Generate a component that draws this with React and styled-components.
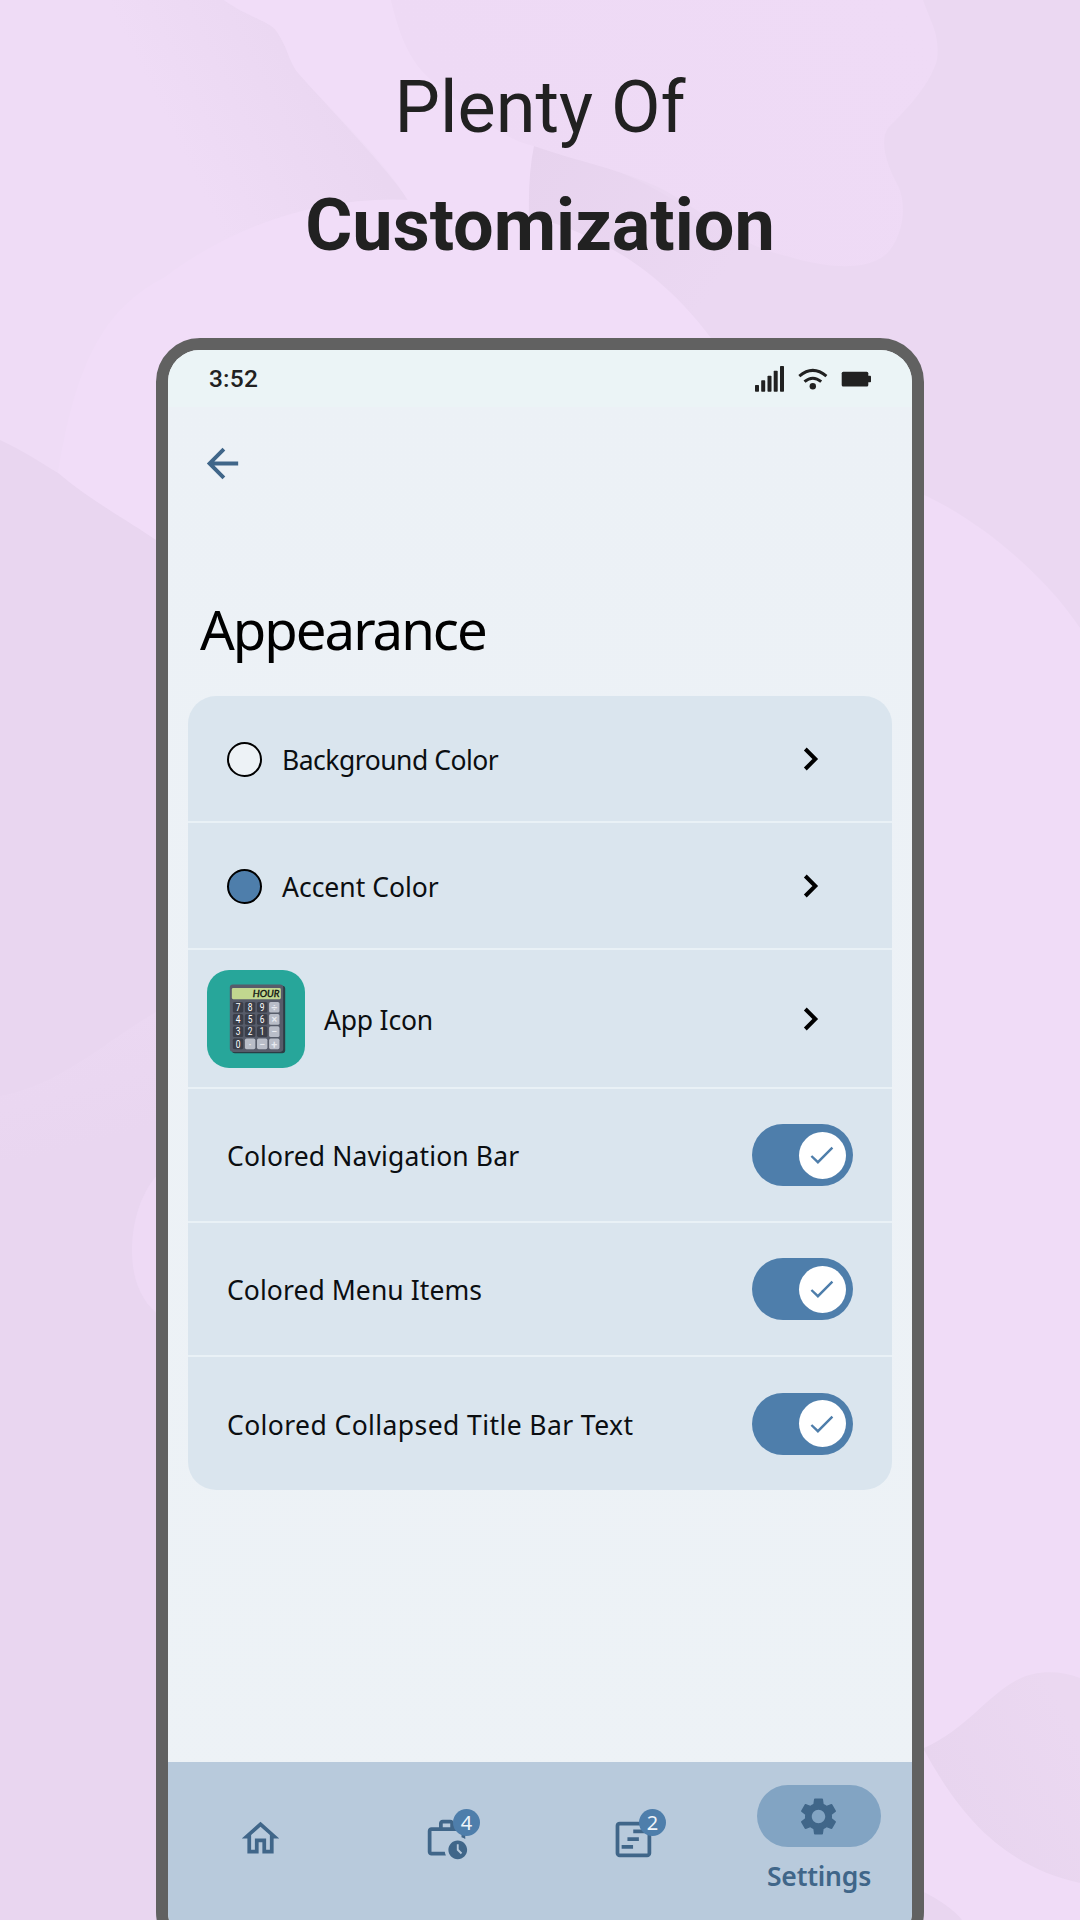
import React from "react";
import styled, { createGlobalStyle } from "styled-components";
import { MdArrowBack, MdOutlineHome, MdOutlineWorkHistory, MdSettings } from "react-icons/md";

const ink = "#406689";
const accent = "#4e7eab";

const GlobalStyle = createGlobalStyle`
  * { box-sizing: border-box; }
  body { margin: 0; background: #ecd9f3; }
`;

const Page = styled.main`
  position: relative;
  width: 1080px;
  height: 1920px;
  overflow: hidden;
  display: flex;
  flex-direction: column;
  align-items: center;
  padding-top: 49px;
  font-family: "Noto Sans", sans-serif;
`;

const Backdrop = styled.svg`
  position: absolute;
  inset: 0;
  width: 1080px;
  height: 1920px;
`;

const Headline = styled.h1`
  position: relative;
  margin: 0;
  height: 289px;
  flex: none;
  font-family: Roboto, sans-serif;
  font-size: 72px;
  line-height: 118px;
  font-weight: 400;
  text-align: center;
  color: #212121;
`;

const HeadlineLine = styled.span`
  display: block;
  font-weight: ${(p) => (p.$strong ? 700 : 400)};
`;

const Phone = styled.section`
  position: relative;
  flex: none;
  width: 768px;
  height: 1618px;
  border: 12px solid #616161;
  border-radius: 44px;
  overflow: hidden;
  display: flex;
  flex-direction: column;
  background: linear-gradient(#ecf1f6, #edf2f6);
`;

const StatusBar = styled.header`
  display: flex;
  justify-content: space-between;
  height: 57px;
  flex: none;
  padding: 0 41px;
  background: #ebf4f6;
  color: #212121;
`;

const Clock = styled.time`
  font: 500 24.5px/57px Roboto, sans-serif;
  letter-spacing: 0.2px;
`;

const StatusIcons = styled.svg`
  width: 118px;
  height: 57px;
  fill: currentColor;
`;

const TopBar = styled.div`
  height: 112px;
  flex: none;
  padding: 0 31px;
  display: flex;
  align-items: center;
  color: ${ink};
`;

const BackButton = styled.button`
  display: flex;
  padding: 0;
  border: 0;
  background: none;
  color: inherit;
`;

const Title = styled.h2`
  margin: 72px 0 0;
  padding-left: 32px;
  height: 105px;
  flex: none;
  font-size: 54.5px;
  line-height: 76px;
  font-weight: 400;
  letter-spacing: -2px;
  color: #000;
`;

const Card = styled.ul`
  list-style: none;
  margin: 0 20px;
  padding: 0;
  height: 794px;
  flex: none;
  border-radius: 28px;
  overflow: hidden;
  background: #dae5ee;
`;

const Row = styled.li`
  display: flex;
  align-items: center;
  height: ${(p) => p.$height}px;
  padding: 0 39px 0 ${(p) => p.$inset}px;
  & + & { border-top: 2px solid #e9f1f6; }
`;

const Label = styled.span`
  flex: 1;
  position: relative;
  top: 1px;
  font-size: 26.5px;
  line-height: 36px;
  letter-spacing: ${(p) => p.$spacing}px;
  white-space: nowrap;
  color: #0b0e11;
`;

const Swatch = styled.span`
  width: 35px;
  height: 35px;
  margin: 1px 20px 0 0;
  border: 2px solid #000;
  border-radius: 50%;
  background: ${(p) => p.$color};
`;

const AppTile = styled.svg`
  width: 98px;
  height: 98px;
  margin-right: 19px;
`;

const Chevron = styled.svg`
  width: 16px;
  height: 24px;
  margin-right: 34px;
  fill: none;
  stroke: #000;
  stroke-width: 4;
`;

const Track = styled.span`
  width: 101px;
  height: 62px;
  padding-right: 7.5px;
  border-radius: 31px;
  background: ${accent};
  display: flex;
  align-items: center;
  justify-content: flex-end;
`;

const Knob = styled.span`
  width: 47px;
  height: 47px;
  border-radius: 50%;
  background: #fff;
  display: flex;
  align-items: center;
  justify-content: center;
`;

const Nav = styled.nav`
  display: flex;
  height: 182px;
  margin-top: auto;
  flex: none;
  padding-bottom: 24px;
  background: #b8cadc;
  color: ${ink};
`;

const NavItem = styled.a`
  width: 186px;
  display: flex;
  flex-direction: column;
  align-items: center;
  justify-content: ${(p) => (p.$active ? "flex-start" : "center")};
  padding-top: ${(p) => (p.$active ? 23 : 0)}px;
  padding-right: ${(p) => (p.$active ? 0 : 2)}px;
  padding-bottom: ${(p) => (p.$active ? 0 : 6)}px;
`;

const NavIcon = styled.span`
  position: relative;
  display: flex;
`;

const Pill = styled.span`
  width: 124px;
  height: 62px;
  padding-right: 1px;
  border-radius: 31px;
  background: #82a4c3;
  display: flex;
  align-items: center;
  justify-content: center;
`;

const Badge = styled.span`
  position: absolute;
  left: 29.5px;
  top: -6.5px;
  width: 27px;
  height: 27px;
  border-radius: 50%;
  background: ${accent};
  color: #eef4fa;
  font-size: 20px;
  line-height: 27px;
  text-align: center;
`;

const NavLabel = styled.span`
  margin-top: 11px;
  font-size: 26.5px;
  line-height: 36px;
  font-weight: 600;
  letter-spacing: -0.2px;
`;

function Waves() {
  return (
    <Backdrop viewBox="0 0 1080 1920" aria-hidden="true">
      <defs>
        <linearGradient id="fold" x1="200" y1="190" x2="352" y2="115" gradientUnits="userSpaceOnUse">
          <stop offset="0" stopColor="#ead7f1" stopOpacity="0" />
          <stop offset="1" stopColor="#ead7f1" />
        </linearGradient>
        <linearGradient id="sheet" x1="560" y1="250" x2="900" y2="0" gradientUnits="userSpaceOnUse">
          <stop offset="0" stopColor="#eedaf5" />
          <stop offset="1" stopColor="#efdbf6" />
        </linearGradient>
        <linearGradient id="wedge" x1="530" y1="150" x2="720" y2="280" gradientUnits="userSpaceOnUse">
          <stop offset="0" stopColor="#e7d3ee" />
          <stop offset="1" stopColor="#ebd8f2" />
        </linearGradient>
        <linearGradient id="band" x1="40" y1="1040" x2="70" y2="1150" gradientUnits="userSpaceOnUse">
          <stop offset="0" stopColor="#ebd8f2" />
          <stop offset="1" stopColor="#ebd8f2" stopOpacity="0" />
        </linearGradient>
        <linearGradient id="leaf" x1="930" y1="1770" x2="1060" y2="1700" gradientUnits="userSpaceOnUse">
          <stop offset="0" stopColor="#e8d5ef" />
          <stop offset="1" stopColor="#ebd8f1" />
        </linearGradient>
      </defs>
      <rect width="1080" height="1920" fill="#ebd8f2" />
      <path d="M0 0H560V600H0Z" fill="#efdcf6" />
      <path d="M100 0H224C250 18 262 18 275 29C290 50 288 62 300 75C340 120 380 160 410 202L200 300L100 200Z" fill="url(#fold)" />
      <path d="M224 0H391C405 60 425 75 441 88C480 120 510 140 534 146L529 215L410 204C385 160 340 120 300 75C288 62 290 50 275 29C262 18 250 18 224 0Z" fill="#f1ddf8" />
      <path d="M534 146C600 160 660 185 700 220L800 260L760 400H560L529 215Q528 175 534 146Z" fill="url(#wedge)" />
      <path d="M391 0C402 48 416 70 441 88C480 118 505 140 534 146C572 160 625 170 664 190C710 215 735 245 790 257C820 266 870 275 890 250C905 230 907 200 896 182C885 160 880 140 888 128C906 110 930 85 937 60C940 35 932 25 923 0Z" fill="url(#sheet)" />
      <path d="M58 473C75 370 100 310 165 277C240 220 330 195 413 200C580 205 660 270 711 338V560H156Z" fill="#f1ddf8" />
      <path d="M0 440C22 450 45 465 58 473C90 500 130 522 156 540V1920H0Z" fill="#e9d6f0" />
      <path d="M0 1096C60 1085 100 1045 156 1012V1160H0Z" fill="url(#band)" />
      <path d="M160 1172C142 1190 132 1220 132 1250C132 1285 145 1305 160 1316Z" fill="#eedaf5" />
      <path d="M920 493C980 520 1045 575 1080 628V1920H920Z" fill="#f0dcf7" />
      <path d="M924 1748C965 1730 988 1695 1017 1680C1035 1670 1060 1670 1080 1678V1883C1000 1865 958 1812 924 1750Z" fill="url(#leaf)" />
      <path d="M920 1890Q950 1905 962 1920H920Z" fill="#e9d6f0" />
    </Backdrop>
  );
}

function Status() {
  return (
    <StatusIcons viewBox="753 350 118 57">
      <rect x="755" y="385" width="4" height="6.7" rx=".7" />
      <rect x="761.2" y="380.2" width="4" height="11.5" rx=".7" />
      <rect x="767.5" y="375.7" width="4" height="16" rx=".7" />
      <rect x="773.7" y="370.8" width="4" height="20.9" rx=".7" />
      <rect x="780" y="366" width="4" height="25.7" rx=".7" />
      <g fill="none" stroke="currentColor" strokeWidth="3">
        <path d="M799.3 376.1Q812.8 364.6 826.4 376.1" />
        <path d="M804.5 381.6Q812.8 374.8 821.2 381.6" />
      </g>
      <circle cx="812.8" cy="386.2" r="3.2" />
      <rect x="841.7" y="371.7" width="26.6" height="14.7" rx="1.5" />
      <rect x="867" y="375.7" width="4" height="6.5" rx=".8" />
    </StatusIcons>
  );
}

const keys = [
  ["7", "8", "9", "÷"],
  ["4", "5", "6", "×"],
  ["3", "2", "1", "−"],
  ["0", "·", "−", "+"],
];

function CalculatorTile() {
  return (
    <AppTile viewBox="0 0 292 292">
      <rect width="292" height="292" rx="66" fill="#27a69a" />
      <rect x="74" y="47" width="159" height="201" rx="9" fill="#2b3d45" />
      <rect x="68" y="43" width="159" height="201" rx="9" fill="#575c6a" />
      <rect x="74" y="54" width="146" height="33" rx="4" fill="#c1d78f" />
      <text x="216" y="80" textAnchor="end" fontFamily="Lato, sans-serif" fontSize="27" fontWeight="400" fontStyle="italic" textLength="80" lengthAdjust="spacingAndGlyphs" fill="#101510" stroke="#101510" strokeWidth="1">HOUR</text>
      {keys.map((line, r) =>
        line.map((key, c) => {
          const light = c === 3 || (r === 3 && c > 0);
          const x = 77 + c * 36;
          const y = 95 + r * 36.4;
          return (
            <g key={r + "-" + c}>
              <rect x={x} y={y} width="31" height="32" rx="5" fill={light ? "#b9bdc8" : "#3b3e49"} />
              <text x={x + 15.5} y={y + 27} textAnchor="middle" fontFamily="Roboto, sans-serif" fontSize="32" fontWeight={light ? 500 : 400} textLength={light ? undefined : 14} lengthAdjust="spacingAndGlyphs" fill={light ? "#e8eaf0" : "#fff"}>{key}</text>
            </g>
          );
        })
      )}
    </AppTile>
  );
}

function Arrow() {
  return (
    <Chevron viewBox="0 0 16 24">
      <path d="M2.3 2L12.3 12L2.3 22" />
    </Chevron>
  );
}

function Toggle() {
  return (
    <Track role="switch" aria-checked="true">
      <Knob>
        <svg width="24" height="20" viewBox="0 0 24 20" fill="none" stroke={accent} strokeWidth="2.4">
          <path d="M1.4 11L7.9 17.2L22.4 2.6" />
        </svg>
      </Knob>
    </Track>
  );
}

function TaskIcon() {
  return (
    <svg width="45" height="45" viewBox="0 0 24 24" fill="none" stroke="currentColor" strokeWidth="2">
      <rect x="4" y="4" width="17" height="17" rx="1.2" />
      <path d="M12.4 8.2H18.5M9.3 12.3H15.4M6.2 16.4H12.3" />
    </svg>
  );
}

export default function App() {
  return (
    <Page>
      <GlobalStyle />
      <Waves />
      <Headline>
        <HeadlineLine>Plenty Of</HeadlineLine>
        <HeadlineLine $strong>Customization</HeadlineLine>
      </Headline>
      <Phone>
        <StatusBar>
          <Clock>3:52</Clock>
          <Status />
        </StatusBar>
        <TopBar>
          <BackButton aria-label="Back"><MdArrowBack size={47} /></BackButton>
        </TopBar>
        <Title>Appearance</Title>
        <Card>
          <Row $height={125} $inset={39}>
            <Swatch $color="#edf2f6" />
            <Label $spacing={-0.5}>Background Color</Label>
            <Arrow />
          </Row>
          <Row $height={127} $inset={39}>
            <Swatch $color={accent} />
            <Label $spacing={0}>Accent Color</Label>
            <Arrow />
          </Row>
          <Row $height={139} $inset={19}>
            <CalculatorTile />
            <Label $spacing={-0.2}>App Icon</Label>
            <Arrow />
          </Row>
          <Row $height={134} $inset={39}>
            <Label $spacing={0.13}>Colored Navigation Bar</Label>
            <Toggle />
          </Row>
          <Row $height={134} $inset={39}>
            <Label $spacing={0.07}>Colored Menu Items</Label>
            <Toggle />
          </Row>
          <Row $height={135} $inset={39}>
            <Label $spacing={0.41}>Colored Collapsed Title Bar Text</Label>
            <Toggle />
          </Row>
        </Card>
        <Nav>
          <NavItem>
            <NavIcon><MdOutlineHome size={45} /></NavIcon>
          </NavItem>
          <NavItem>
            <NavIcon><MdOutlineWorkHistory size={45} /><Badge>4</Badge></NavIcon>
          </NavItem>
          <NavItem>
            <NavIcon><TaskIcon /><Badge>2</Badge></NavIcon>
          </NavItem>
          <NavItem $active>
            <Pill><MdSettings size={45} /></Pill>
            <NavLabel>Settings</NavLabel>
          </NavItem>
        </Nav>
      </Phone>
    </Page>
  );
}
